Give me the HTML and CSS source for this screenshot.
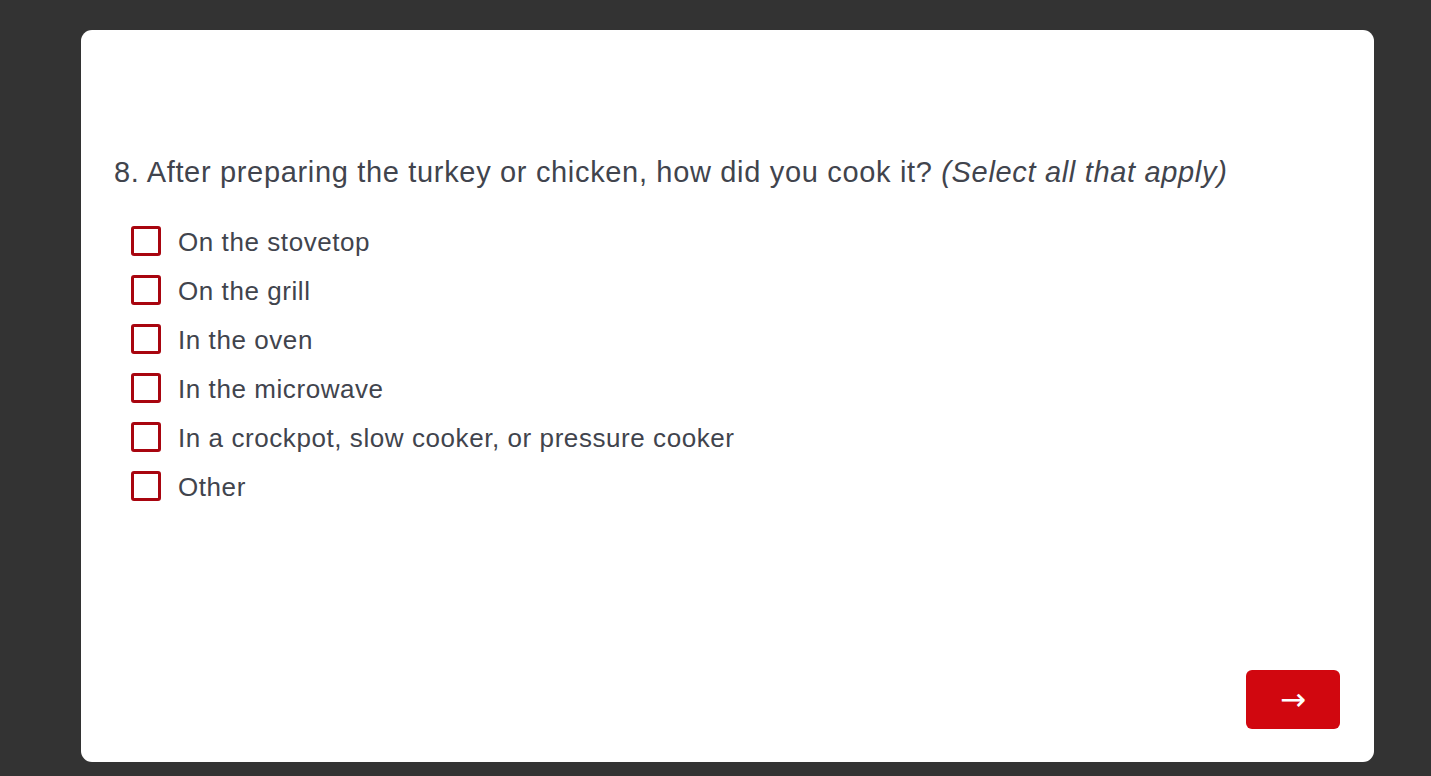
FILE: index.html
```html
<!DOCTYPE html>
<html lang="en">
<head>
<meta charset="utf-8">
<title>Survey</title>
<link rel="stylesheet" href="styles.css">
</head>
<body>
<div class="card">
  <div class="question">
    <h1 class="q-title">8. After preparing the turkey or chicken, how did you cook it? <em>(Select all that apply)</em></h1>
    <ul class="options">
      <li class="option"><span class="box"></span><span class="label">On the stovetop</span></li>
      <li class="option"><span class="box"></span><span class="label">On the grill</span></li>
      <li class="option"><span class="box"></span><span class="label">In the oven</span></li>
      <li class="option"><span class="box"></span><span class="label">In the microwave</span></li>
      <li class="option"><span class="box"></span><span class="label">In a crockpot, slow cooker, or pressure cooker</span></li>
      <li class="option"><span class="box"></span><span class="label">Other</span></li>
    </ul>
  </div>
  <div class="footer">
    <button class="next" type="button">→</button>
  </div>
</div>
</body>
</html>
```
FILE: styles.css
```css
* { box-sizing: border-box; }
html, body { margin: 0; padding: 0; }
body {
  background: #333333;
  font-family: "Liberation Sans", Arial, sans-serif;
  color: #41444d;
  padding: 30px 57px 14px 81px;
  height: 776px;
}
.card {
  background: #ffffff;
  border-radius: 11px;
  width: 1293px;
  height: 732px;
  padding: 124px 34px 33px 33px;
  display: flex;
  flex-direction: column;
}
.question { flex: 1; }
.q-title {
  margin: 0;
  font-size: 29px;
  letter-spacing: 0.67px;
  font-weight: normal;
  line-height: 36px;
}
.q-title em { font-style: italic; }
.options {
  list-style: none;
  margin: 36px 0 0 17px;
  padding: 0;
  display: flex;
  flex-direction: column;
  gap: 19px;
}
.option {
  display: flex;
  align-items: center;
  gap: 17px;
  height: 30px;
  font-size: 26px;
  letter-spacing: 0.57px;
}
.label { padding-top: 2px; }
.box {
  width: 30px;
  height: 30px;
  border: 3px solid #a8050f;
  border-radius: 3px;
  flex: none;
}
.footer {
  display: flex;
  justify-content: flex-end;
}
.next {
  width: 94px;
  height: 59px;
  border: none;
  border-radius: 6px;
  background: #d1070f;
  color: #ffffff;
  font-family: "DejaVu Sans", sans-serif;
  font-size: 31px;
  line-height: 1;
  padding: 0;
}
```
